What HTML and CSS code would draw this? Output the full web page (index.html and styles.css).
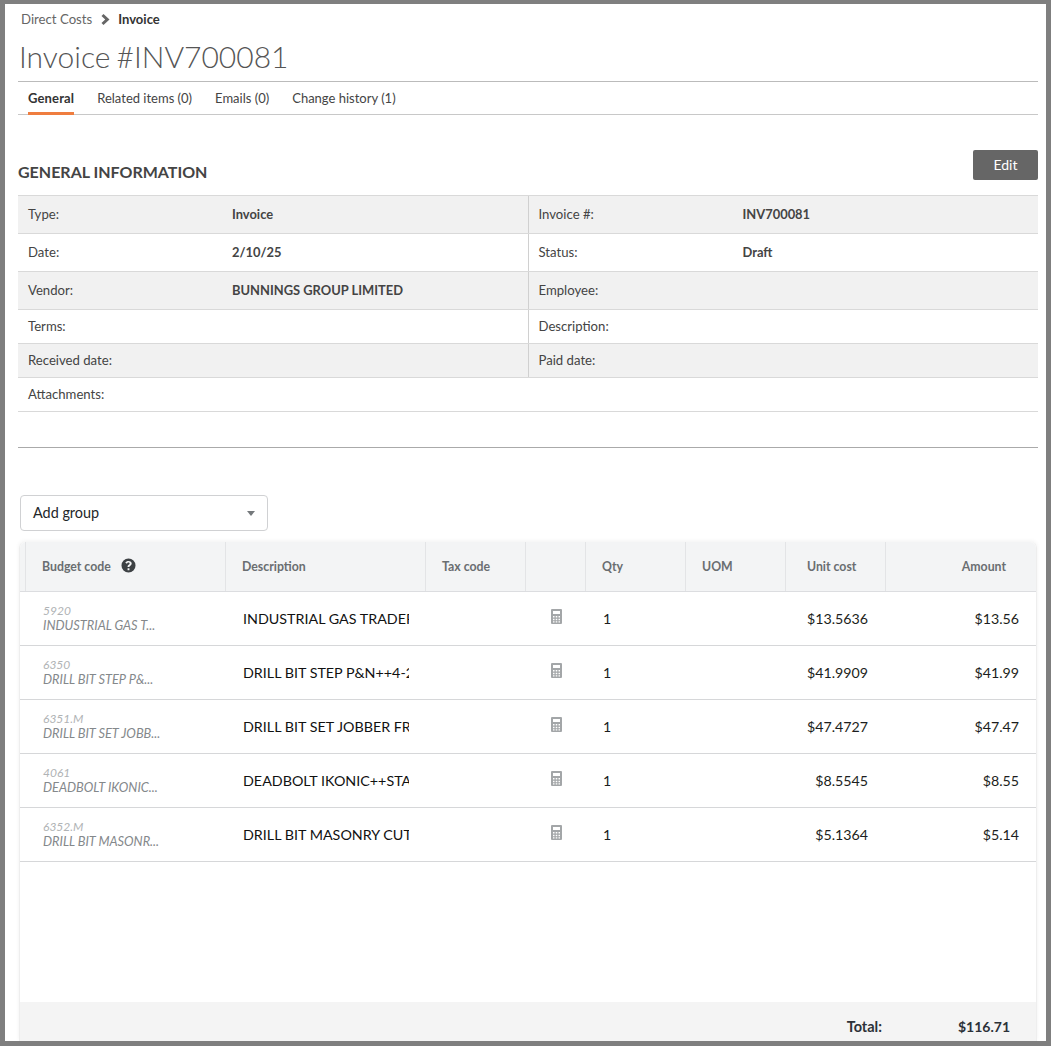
FILE: index.html
```html
<!DOCTYPE html>
<html lang="en">
<head>
    <meta charset="UTF-8">
    <title>Invoice #INV700081</title>
    <link rel="stylesheet" href="styles.css">
</head>
<body>

<div class="frame">
    <div class="page">
        <div class="breadcrumb">
            <span>Direct Costs</span>
            <svg class="crumb-arrow" viewBox="0 0 9 11" width="9" height="11"><path d="M2.500 0 L8.500 5.500 L2.500 11 L0.500 9 L4.200 5.500 L0.500 2 Z"/></svg>
            <strong>Invoice</strong>
        </div>
        <h1>Invoice #INV700081</h1>

        <div class="tabs">
            <a class="tab active">General</a>
            <a class="tab">Related items (0)</a>
            <a class="tab">Emails (0)</a>
            <a class="tab">Change history (1)</a>
        </div>

        <div class="section-head">
            <h2>GENERAL INFORMATION</h2>
            <button class="edit-btn">Edit</button>
        </div>

        <div class="info">
            <div class="info-row tall shaded">
                <div class="info-cell"><span class="info-label">Type:</span><b>Invoice</b></div>
                <div class="info-cell"><span class="info-label">Invoice #:</span><b>INV700081</b></div>
            </div>
            <div class="info-row tall">
                <div class="info-cell"><span class="info-label">Date:</span><b>2/10/25</b></div>
                <div class="info-cell"><span class="info-label">Status:</span><b>Draft</b></div>
            </div>
            <div class="info-row tall shaded">
                <div class="info-cell"><span class="info-label">Vendor:</span><b>BUNNINGS GROUP LIMITED</b></div>
                <div class="info-cell"><span class="info-label">Employee:</span></div>
            </div>
            <div class="info-row">
                <div class="info-cell"><span class="info-label">Terms:</span></div>
                <div class="info-cell"><span class="info-label">Description:</span></div>
            </div>
            <div class="info-row shaded">
                <div class="info-cell"><span class="info-label">Received date:</span></div>
                <div class="info-cell"><span class="info-label">Paid date:</span></div>
            </div>
            <div class="info-row">
                <div class="info-cell"><span class="info-label">Attachments:</span></div>
            </div>
        </div>

        <hr class="divider">

        <div class="add-group">
            <span>Add group</span>
            <i class="caret"></i>
        </div>

        <div class="grid">
            <div class="grid-head">
                <div class="col col-stub"></div>
                <div class="col col-code">Budget code
                    <svg class="help" viewBox="0 0 16 16" width="15" height="15"><path fill-rule="evenodd" d="M8 .5a7.500 7.500 0 1 0 0 15 7.500 7.500 0 0 0 0-15zM7 11h2v2H7zM8.200 3.200c1.900 0 3.200 1.100 3.200 2.700 0 1.200-.7 1.800-1.400 2.300-.6.4-1 .7-1 1.300v.2H7v-.4c0-1.100.6-1.700 1.200-2.100.6-.4 1-.7 1-1.300 0-.6-.5-1-1.200-1-.8 0-1.300.5-1.600 1.200L4.600 5.100C5.200 3.900 6.400 3.200 8.200 3.200z"/></svg>
                </div>
                <div class="col col-desc">Description</div>
                <div class="col col-tax">Tax code</div>
                <div class="col col-calc"></div>
                <div class="col col-qty">Qty</div>
                <div class="col col-uom">UOM</div>
                <div class="col col-unit">Unit cost</div>
                <div class="col col-amount">Amount</div>
            </div>

            <div class="grid-row">
                <div class="code-cell"><em>5920</em><small>INDUSTRIAL GAS T...</small></div>
                <div class="desc-cell">INDUSTRIAL GAS TRADERS CYLINDER</div>
                <div class="calc-cell"><svg class="calc" viewBox="0 0 11 15" width="11" height="15"><use href="#calc-icon"/></svg></div>
                <div class="qty-cell">1</div>
                <div class="unit-cell">$13.5636</div>
                <div class="amount-cell">$13.56</div>
            </div>
            <div class="grid-row">
                <div class="code-cell"><em>6350</em><small>DRILL BIT STEP P&amp;...</small></div>
                <div class="desc-cell">DRILL BIT STEP P&amp;N++4-20MM HSS</div>
                <div class="calc-cell"><svg class="calc" viewBox="0 0 11 15" width="11" height="15"><use href="#calc-icon"/></svg></div>
                <div class="qty-cell">1</div>
                <div class="unit-cell">$41.9909</div>
                <div class="amount-cell">$41.99</div>
            </div>
            <div class="grid-row">
                <div class="code-cell"><em>6351.M</em><small>DRILL BIT SET JOBB...</small></div>
                <div class="desc-cell">DRILL BIT SET JOBBER FRACTIONAL</div>
                <div class="calc-cell"><svg class="calc" viewBox="0 0 11 15" width="11" height="15"><use href="#calc-icon"/></svg></div>
                <div class="qty-cell">1</div>
                <div class="unit-cell">$47.4727</div>
                <div class="amount-cell">$47.47</div>
            </div>
            <div class="grid-row">
                <div class="code-cell"><em>4061</em><small>DEADBOLT IKONIC...</small></div>
                <div class="desc-cell">DEADBOLT IKONIC++STANDARD KEY</div>
                <div class="calc-cell"><svg class="calc" viewBox="0 0 11 15" width="11" height="15"><use href="#calc-icon"/></svg></div>
                <div class="qty-cell">1</div>
                <div class="unit-cell">$8.5545</div>
                <div class="amount-cell">$8.55</div>
            </div>
            <div class="grid-row">
                <div class="code-cell"><em>6352.M</em><small>DRILL BIT MASONR...</small></div>
                <div class="desc-cell">DRILL BIT MASONRY CUTTING EDGE</div>
                <div class="calc-cell"><svg class="calc" viewBox="0 0 11 15" width="11" height="15"><use href="#calc-icon"/></svg></div>
                <div class="qty-cell">1</div>
                <div class="unit-cell">$5.1364</div>
                <div class="amount-cell">$5.14</div>
            </div>

            <div class="grid-space"></div>

            <div class="grid-total">
                <b class="total-label">Total:</b>
                <b class="total-value">$116.71</b>
            </div>
        </div>
    </div>
</div>

<svg class="defs" width="0" height="0">
    <symbol id="calc-icon" viewBox="0 0 11 15">
        <path fill="#a3a6a8" fill-rule="evenodd" d="M1 0h9a1 1 0 0 1 1 1v13a1 1 0 0 1-1 1H1a1 1 0 0 1-1-1V1a1 1 0 0 1 1-1zM2 2v3h7V2zM2 7v1.500h1.500V7zM4.700 7v1.500h1.600V7zM7.500 7v1.500H9V7zM2 9.700v1.500h1.500V9.700zM4.700 9.700v1.500h1.600V9.700zM7.500 9.700v1.500H9V9.700zM2 12.200v1.300h1.500v-1.300zM4.700 12.200v1.300h1.600v-1.300zM7.500 12.200v1.300H9v-1.300z"/>
    </symbol>
</svg>

</body>
</html>
```

FILE: styles.css
```css
* { box-sizing: border-box; }
html, body { margin: 0; padding: 0; background: #fff; }
body { font-family: "Lato", sans-serif; font-size: 13px; color: #333; }
.defs { position: absolute; }

.frame { width: 1051px; height: 1046px; border: 5px solid #7f7f7f; border-top-width: 4px; overflow: hidden; background: #fff; }
.page { padding: 0 8px 0 13px; }

.breadcrumb { display: flex; align-items: center; height: 30px; padding-left: 3px; color: #666; font-size: 13.200px; }
.breadcrumb strong { color: #333; font-weight: 700; font-size: 13px; }
.crumb-arrow { margin: 0 8px 0 9px; fill: #666; }

h1 { margin: 0; height: 48px; padding-left: 1px; font-size: 30px; line-height: 44px; font-weight: 300; word-spacing: -2px; color: #555; border-bottom: 1px solid #bbb; }

.tabs { display: flex; height: 33px; padding-left: 10px; border-bottom: 1px solid #c8c8c8; gap: 23px; }
.tab { display: block; height: 33px; line-height: 33px; color: #444; }
.tab.active { font-weight: 700; color: #333; letter-spacing: 0.15px; border-bottom: 3px solid #ef7d3f; }

.section-head { position: relative; height: 80px; }
.section-head h2 { margin: 0; position: absolute; left: 0; top: 47px; font-size: 16px; line-height: 20px; font-weight: 700; color: #444; }
.edit-btn { position: absolute; right: 0; top: 35px; width: 65px; height: 30px; padding: 0 0 2px; background: #666; color: #fff; border: none; border-radius: 2px; font-family: inherit; font-size: 14px; }

.info { border-top: 1px solid #d9d9d9; }
.info-row { display: flex; height: 34px; border-bottom: 1px solid #d9d9d9; }
.info-row.tall { height: 38px; }
.info-row.shaded { background: #f1f1f1; }
.info-cell { display: flex; align-items: center; flex: 1; padding: 0 0 2px 10px; }
.info-cell + .info-cell { border-left: 1px solid #d0d0d0; }
.info-label { width: 204px; color: #444; font-size: 13.150px; }
.info-cell b { font-weight: 700; color: #444; font-size: 12.900px; }

.divider { margin: 35px 0 47px; border: none; border-top: 1px solid #aaa; }

.add-group { display: flex; justify-content: space-between; align-items: center; width: 248px; height: 36px; margin-left: 2px; padding: 0 12px 2px; border: 1px solid #d0d1d3; border-radius: 4px; font-size: 14.400px; color: #232628; }
.caret { border: 4px solid transparent; border-top: 5px solid #75797c; border-bottom: 0; position: relative; top: 1px; }

.grid { width: 1018px; height: 499px; margin: 11px 0 0 1px; display: flex; flex-direction: column; border-right: 1px solid #eee; border-left: 1px solid #eee; border-radius: 6px 6px 0 0; box-shadow: 0 -1px 4px rgba(0, 0, 0, 0.06); }
.grid-head { display: flex; flex: none; height: 50px; background: #f3f4f5; border-bottom: 1px solid #dcdde0; border-radius: 6px 6px 0 0; }
.col { display: flex; align-items: center; flex: none; padding-left: 16px; font-size: 12.300px; font-weight: 700; color: #6a6e71; border-right: 1px solid #e3e4e6; }
.col-stub { width: 6px; padding: 0; }
.col-code { width: 200px; }
.col-desc { width: 200px; }
.col-tax { width: 100px; }
.col-calc { width: 60px; }
.col-qty { width: 100px; }
.col-uom { width: 100px; }
.col-unit { width: 100px; padding-left: 21px; }
.col-amount { flex: 1; justify-content: flex-end; padding-right: 30px; border-right: none; }
.help { margin-left: 10px; fill: #3d4144; position: relative; top: -1px; }

.grid-row { display: flex; flex: none; align-items: center; height: 54px; border-bottom: 1px solid #d6d7d9; color: #1c1e20; font-size: 14.200px; }
.code-cell { display: flex; flex-direction: column; flex: none; width: 206px; padding: 0 0 2px 23px; font-style: italic; color: #84888b; }
.code-cell em { font-size: 12px; line-height: 14px; color: #b0b3b5; }
.code-cell small { font-size: 12.800px; line-height: 14px; }
.desc-cell { flex: none; width: 183px; padding-left: 17px; overflow: hidden; white-space: nowrap; font-size: 14.300px; color: #111; }
.calc-cell { display: flex; flex: none; width: 177px; height: 15px; padding-left: 142px; }
.calc { flex: none; position: relative; top: -2px; }
.qty-cell { flex: none; width: 100px; padding-left: 17px; }
.unit-cell { flex: none; width: 182px; text-align: right; }
.amount-cell { flex: 1; text-align: right; padding-right: 17px; }

.grid-space { flex: 1; }
.grid-total { display: flex; flex: none; justify-content: flex-end; align-items: center; height: 39px; padding: 10px 26px 0 0; background: #f4f4f4; font-size: 14px; color: #2c3138; }
.total-label { margin-right: 76px; font-size: 14.500px; }
```
